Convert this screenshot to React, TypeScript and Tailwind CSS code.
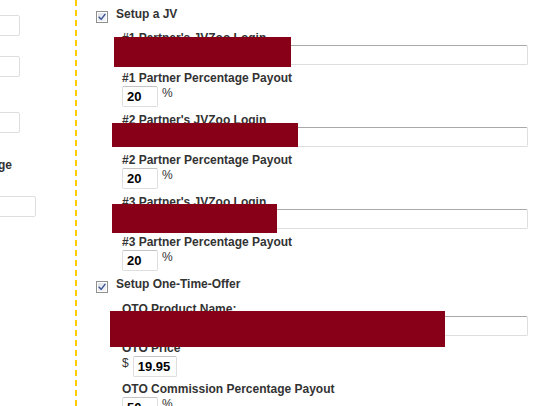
import type { ReactNode } from 'react'

const font = { fontFamily: '"Liberation Sans", Arial, sans-serif' }

function CheckBox() {
  return (
    <span className="mt-[4px] flex h-[12px] w-[12px] shrink-0 items-center justify-center border border-[#8e8f8f] bg-gradient-to-br from-[#dcdfe6] to-[#f6f7f9] shadow-[inset_0_0_0_1px_#ffffff]">
      <svg viewBox="0 0 12 12" className="h-[10px] w-[10px]" fill="none" stroke="#3b5596" strokeWidth={1.8} strokeLinecap="round" strokeLinejoin="round">
        <path d="M2.5 6.2 L5 8.8 L9.6 2.8" />
      </svg>
    </span>
  )
}

function Label({ children }: { children: ReactNode }) {
  return <div className="h-[14px] whitespace-nowrap text-[12px] font-bold leading-[14px] text-[#333333]">{children}</div>
}

function WideField({ label, className = '' }: { label: string; className?: string }) {
  return (
    <div className={className}>
      <Label>{label}</Label>
      <div className="h-[20px] rounded-[2px] border border-[#dedede] border-t-[#a9a9a9] bg-white" />
    </div>
  )
}

function SmallField({ label, value, prefix, suffix, width, className = '' }: {
  label: string
  value: string
  prefix?: string
  suffix?: string
  width: string
  className?: string
}) {
  return (
    <div className={className}>
      <Label>{label}</Label>
      <div className="mt-[1px] flex items-start gap-[4px]">
        {prefix && <span className="text-[12px] leading-[14px] text-[#333333]">{prefix}</span>}
        <div className={`flex h-[21px] items-center rounded-[2px] border border-[#dedede] border-t-[#c4c4c4] bg-white pl-[4px] text-[13px] font-bold text-black ${width}`}>
          {value}
        </div>
        {suffix && <span className="text-[12px] leading-[14px] text-[#333333]">{suffix}</span>}
      </div>
    </div>
  )
}

export default function App() {
  return (
    <div className="relative flex h-[406px] w-[540px] overflow-hidden bg-white" style={font}>
      {/* left column, mostly scrolled out of view */}
      <div className="w-[75px] shrink-0 overflow-hidden">
        <div className="ml-[-150px] flex w-[225px] flex-col items-start">
          <div className="mt-[15px] h-[21px] w-[170px] rounded-[2px] border border-[#dedede] bg-white" />
          <div className="mt-[20px] h-[21px] w-[170px] rounded-[2px] border border-[#dedede] bg-white" />
          <div className="mt-[35px] h-[21px] w-[170px] rounded-[2px] border border-[#dedede] bg-white" />
          <div className="mt-[25px] w-[162px] whitespace-nowrap text-right text-[12px] font-bold leading-[14px] text-[#333333]">
            Commission Percentage
          </div>
          <div className="mt-[24px] h-[21px] w-[186px] rounded-[2px] border border-[#dedede] bg-white" />
        </div>
      </div>

      {/* right column */}
      <div className="flex-1 border-l-2 border-dashed border-[#ffcc00] pl-[19px] pr-[12px] pt-[7px]">
        <div className="flex items-start gap-[8px]">
          <CheckBox />
          <span className="text-[12px] font-bold leading-[14px] text-[#333333]">Setup a JV</span>
        </div>
        <div className="mt-[8px] pl-[26px]">
          <WideField label="#1 Partner's JVZoo Login" />
          <SmallField className="mt-[6px]" label="#1 Partner Percentage Payout" value="20" suffix="%" width="w-[36px]" />
          <WideField className="mt-[6px]" label="#2 Partner's JVZoo Login" />
          <SmallField className="mt-[6px]" label="#2 Partner Percentage Payout" value="20" suffix="%" width="w-[36px]" />
          <WideField className="mt-[6px]" label="#3 Partner's JVZoo Login" />
          <SmallField className="mt-[6px]" label="#3 Partner Percentage Payout" value="20" suffix="%" width="w-[36px]" />
        </div>

        <div className="mt-[6px] flex items-start gap-[8px]">
          <CheckBox />
          <span className="text-[12px] font-bold leading-[14px] text-[#333333]">Setup One-Time-Offer</span>
        </div>
        <div className="mt-[9px] pl-[26px]">
          <WideField label="OTO Product Name:" />
          <SmallField className="mt-[5px]" label="OTO Price" value="19.95" prefix="$" width="w-[44px]" />
          <SmallField className="mt-[5px]" label="OTO Commission Percentage Payout" value="50" suffix="%" width="w-[36px]" />
        </div>
      </div>

      {/* redaction blocks */}
      <div className="absolute left-[114px] top-[37px] h-[30px] w-[177px] bg-[#880017]" />
      <div className="absolute left-[112px] top-[123px] h-[24px] w-[186px] bg-[#880017]" />
      <div className="absolute left-[112px] top-[204px] h-[29px] w-[165px] bg-[#880017]" />
      <div className="absolute left-[110px] top-[311px] h-[36px] w-[335px] bg-[#880017]" />
    </div>
  )
}
